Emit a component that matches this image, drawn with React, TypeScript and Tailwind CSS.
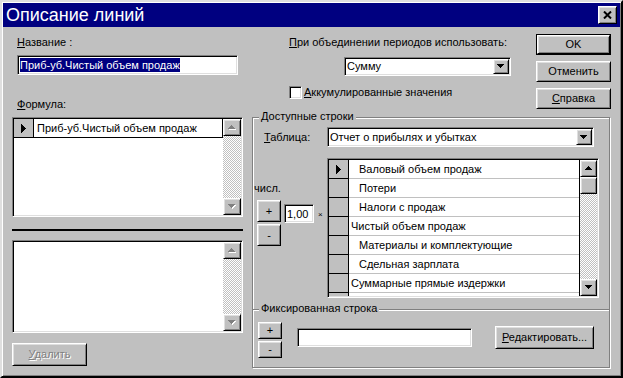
import React from 'react';

const raised =
  'border border-t-white border-l-white border-r-black border-b-black shadow-[inset_1px_1px_0_#dfdfdf,inset_-1px_-1px_0_#808080]';
const sunken =
  'border border-t-[#808080] border-l-[#808080] border-r-white border-b-white shadow-[inset_1px_1px_0_#000,inset_-1px_-1px_0_#dfdfdf]';
const etched = 'border border-[#808080] shadow-[inset_1px_1px_0_#fff,1px_1px_0_#fff]';
const checker =
  'bg-[image:repeating-conic-gradient(#c0c0c0_0%_25%,#ffffff_0%_50%)] bg-[length:2px_2px]';

const triRows = {
  up: [[3, 1], [2, 3], [1, 5], [0, 7]],
  down: [[0, 7], [1, 5], [2, 3], [3, 1]],
};

const Tri = ({ dir, disabled }: { dir: 'up' | 'down'; disabled?: boolean }) => (
  <svg width="8" height="5" viewBox="0 0 8 5" shapeRendering="crispEdges" className="block">
    {disabled &&
      triRows[dir].map(([x, w], i) => (
        <rect key={'s' + i} x={x + 1} y={i + 1} width={w} height={1} fill="#fff" />
      ))}
    {triRows[dir].map(([x, w], i) => (
      <rect key={i} x={x} y={i} width={w} height={1} fill={disabled ? '#808080' : '#000'} />
    ))}
  </svg>
);

const Pointer = () => (
  <svg width="5" height="9" viewBox="0 0 5 9" shapeRendering="crispEdges" className="block">
    {[9, 7, 5, 3, 1].map((h, i) => (
      <rect key={i} x={i} y={(9 - h) / 2} width={1} height={h} fill="#000" />
    ))}
  </svg>
);

const ScrollBtn = ({ dir, disabled }: { dir: 'up' | 'down'; disabled?: boolean }) => (
  <div className={`${raised} w-full h-[17px] shrink-0 flex items-center justify-center bg-[#c0c0c0]`}>
    <Tri dir={dir} disabled={disabled} />
  </div>
);

const DropBtn = () => (
  <div className={`${raised} w-[16px] h-full flex items-center justify-center bg-[#c0c0c0]`}>
    <Tri dir="down" />
  </div>
);

const Button = ({ children, className = '' }: { children: React.ReactNode; className?: string }) => (
  <div className={`${raised} bg-[#c0c0c0] flex items-center justify-center ${className}`}>{children}</div>
);

const tableRows = [
  { text: 'Валовый объем продаж', indent: true, current: true },
  { text: 'Потери', indent: true },
  { text: 'Налоги с продаж', indent: true },
  { text: 'Чистый объем продаж' },
  { text: 'Материалы и комплектующие', indent: true },
  { text: 'Сдельная зарплата', indent: true },
  { text: 'Суммарные прямые издержки' },
  { text: '', indent: true },
];

const LeftColumn = () => (
  <div className="ml-[9px] w-[231px] pt-[8px] flex flex-col">
    <div className="ml-[5px] leading-[14px]">
      <u>Н</u>азвание :
    </div>
    <div className={`${sunken} mt-[6px] ml-[5px] w-[221px] h-[20px] p-[1px] bg-white flex items-center`}>
      <span className="ml-[1px] bg-[#000080] text-white leading-[14px]">Приб-уб.Чистый объем продаж</span>
    </div>
    <div className="mt-[22px] ml-[5px] leading-[14px]">
      <u>Ф</u>ормула:
    </div>
    <div className={`${sunken} mt-[6px] w-[231px] h-[100px] p-[1px] bg-white flex`}>
      <div className="flex-1 flex flex-col">
        <div className="h-[19px] flex">
          <div className="w-[20px] bg-[#c0c0c0] border-r border-b border-black flex items-center justify-center">
            <Pointer />
          </div>
          <div className="flex-1 border-r border-b border-black pl-[3px] leading-[18px]">
            Приб-уб.Чистый объем продаж
          </div>
        </div>
      </div>
      <div className="w-[18px] flex flex-col">
        <ScrollBtn dir="up" disabled />
        <div className={`flex-1 ${checker}`} />
        <ScrollBtn dir="down" disabled />
      </div>
    </div>
    <div className="mt-[12px] h-[2px] bg-black" />
    <div className={`${sunken} mt-[9px] w-[231px] h-[93px] p-[1px] bg-white flex`}>
      <div className="flex-1" />
      <div className="w-[18px] flex flex-col">
        <ScrollBtn dir="up" disabled />
        <div className={`flex-1 ${checker}`} />
        <ScrollBtn dir="down" disabled />
      </div>
    </div>
    <Button className="mt-[10px] w-[75px] h-[23px] text-[#808080] [text-shadow:1px_1px_0_#fff]">
      <span>
        <u>У</u>далить
      </span>
    </Button>
  </div>
);

const TopRight = () => (
  <div className="h-[90px] flex">
    <div className="ml-[37px] w-[222px] pt-[8px] flex flex-col">
      <div className="leading-[14px]">
        <u>П</u>ри объединении периодов использовать:
      </div>
      <div className={`${sunken} mt-[8px] ml-[55px] w-[167px] h-[19px] p-[1px] bg-white flex items-center justify-between`}>
        <span className="pl-[1px]">Сумму</span>
        <DropBtn />
      </div>
      <div className="mt-[9px] flex items-center">
        <div className={`${sunken} w-[13px] h-[13px] bg-white`} />
        <span className="ml-[2px] leading-[14px]">
          <u>А</u>ккумулированные значения
        </span>
      </div>
    </div>
    <div className="ml-[25px] w-[75px] pt-[7px] flex flex-col gap-[6px]">
      <div className="h-[21px] border border-black flex">
        <Button className="flex-1">OK</Button>
      </div>
      <Button className="h-[21px]">Отменить</Button>
      <Button className="h-[21px]">
        <span>
          <u>С</u>правка
        </span>
      </Button>
    </div>
  </div>
);

const GroupBox = () => (
  <div className={`${etched} relative w-[358px] h-[251px] flex flex-col`}>
    <span className="absolute top-[-9px] left-[6px] px-[2px] bg-[#c0c0c0] leading-[14px]">Доступные строки</span>

    <div className="mt-[9px] h-[20px] flex items-center">
      <span className="ml-[11px] w-[63px]">
        <u>Т</u>аблица:
      </span>
      <div className={`${sunken} w-[267px] h-[20px] p-[1px] bg-white flex items-center justify-between`}>
        <span className="pl-[1px]">Отчет о прибылях и убытках</span>
        <DropBtn />
      </div>
    </div>

    <div className="mt-[11px] flex">
      <div className="w-[74px] pt-[23px] flex flex-col">
        <span className="ml-[1px] leading-[14px]">числ.</span>
        <div className="mt-[5px] ml-[4px] flex items-start">
          <div className="w-[24px] flex flex-col gap-[2px]">
            <Button className="h-[22px]">+</Button>
            <Button className="h-[22px]">-</Button>
          </div>
          <div className={`${sunken} ml-[3px] mt-[4px] w-[30px] h-[19px] p-[1px] bg-white flex items-center`}>
            <span className="pl-[1px] leading-[14px]">1,00</span>
          </div>
          <span className="ml-[4px] mt-[10px] text-[8px] leading-[10px]">×</span>
        </div>
      </div>
      <div className={`${sunken} w-[272px] h-[140px] p-[1px] bg-white flex`}>
        <div className="flex-1 overflow-hidden flex flex-col">
          {tableRows.map((r, i) => (
            <div key={i} className="h-[19px] shrink-0 flex">
              <div className="w-[20px] bg-[#c0c0c0] border-r border-b border-black flex items-center justify-center">
                {r.current && <Pointer />}
              </div>
              <div className={`flex-1 border-b border-[#c0c0c0] leading-[18px] ${r.indent ? 'pl-[10px]' : 'pl-[2px]'}`}>
                {r.text}
              </div>
            </div>
          ))}
        </div>
        <div className="w-[18px] border-l border-black flex flex-col">
          <ScrollBtn dir="up" />
          <div className={`${raised} h-[17px] shrink-0 bg-[#c0c0c0]`} />
          <div className={`flex-1 ${checker}`} />
          <ScrollBtn dir="down" />
        </div>
      </div>
    </div>

    <div className="relative mt-[11px] h-[2px] border-t border-[#808080] border-b border-b-white">
      <span className="absolute top-[-9px] left-[6px] px-[2px] bg-[#c0c0c0] leading-[14px]">Фиксированная строка</span>
    </div>

    <div className="mt-[11px] flex items-start">
      <div className="ml-[5px] w-[24px] flex flex-col gap-[2px]">
        <Button className="h-[17px]">+</Button>
        <Button className="h-[17px]">-</Button>
      </div>
      <div className={`${sunken} ml-[15px] mt-[6px] w-[175px] h-[19px] bg-white`} />
      <Button className="ml-[23px] mt-[4px] w-[99px] h-[23px]">
        <span>
          <u>Р</u>едактировать...
        </span>
      </Button>
    </div>
  </div>
);

export default function App() {
  return (
    <div className="w-[623px] h-[378px] bg-[#c0c0c0] border-2 border-t-[#dfdfdf] border-l-[#dfdfdf] border-r-black border-b-black shadow-[inset_1px_1px_0_#fff,inset_-1px_-1px_0_#808080] p-[1px] flex flex-col text-black text-[11px] font-['Liberation_Sans',Arial,sans-serif] overflow-hidden">
      <div className="h-[24px] shrink-0 bg-[#000080] flex items-center justify-between pl-[3px] pr-[3px]">
        <span className="text-white text-[18px] leading-[22px]">Описание линий</span>
        <div className={`${raised} w-[19px] h-[18px] bg-[#c0c0c0] flex items-center justify-center`}>
          <svg width="9" height="8" viewBox="0 0 9 8" className="block">
            <path d="M1 0.5 L8 7.5 M8 0.5 L1 7.5" stroke="#000" strokeWidth="2" />
          </svg>
        </div>
      </div>
      <div className="flex">
        <LeftColumn />
        <div className="ml-[9px] w-[359px] flex flex-col">
          <TopRight />
          <GroupBox />
        </div>
      </div>
    </div>
  );
}
